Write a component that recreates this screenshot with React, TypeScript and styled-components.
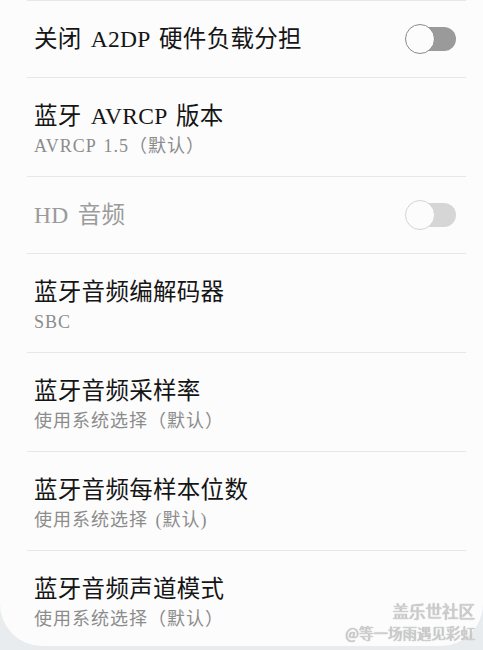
import React from "react"
import styled, { createGlobalStyle } from "styled-components"

const GlobalStyle = createGlobalStyle`
  html, body {
    margin: 0;
    padding: 0;
    background: #e9ecef;
  }
  body {
    font-family: "Liberation Serif", "Noto Sans CJK SC", serif;
  }
`

type TItem = {
  title: string
  summary?: string
  toggle?: boolean
  disabled?: boolean
}

const items: TItem[] = [
  { title: "关闭 A2DP 硬件负载分担", toggle: true },
  { title: "蓝牙 AVRCP 版本", summary: "AVRCP 1.5（默认）" },
  { title: "HD 音频", toggle: true, disabled: true },
  { title: "蓝牙音频编解码器", summary: "SBC" },
  { title: "蓝牙音频采样率", summary: "使用系统选择（默认）" },
  { title: "蓝牙音频每样本位数", summary: "使用系统选择 (默认)" },
  { title: "蓝牙音频声道模式", summary: "使用系统选择（默认）" },
]

const App: React.FC = () => {
  return (
    <Page>
      <GlobalStyle />
      <Card>
        {items.map((item) => (
          <React.Fragment key={item.title}>
            <Divider />
            <Row $tall={!!item.summary}>
              <Texts>
                <Title $disabled={item.disabled}>{item.title}</Title>
                {item.summary && <Summary>{item.summary}</Summary>}
              </Texts>
              {item.toggle && (
                <Switch $disabled={item.disabled}>
                  <span className="track" />
                  <span className="thumb" />
                </Switch>
              )}
            </Row>
          </React.Fragment>
        ))}
      </Card>
      <Watermark>
        <p className="brand">盖乐世社区</p>
        <p className="user">@等一场雨遇见彩虹</p>
      </Watermark>
    </Page>
  )
}

export default App

const Page = styled.div`
  position: relative;
  width: 483px;
  height: 650px;
  overflow: hidden;
  background: #e9ecef;
`

const Card = styled.div`
  display: flex;
  flex-direction: column;
  width: 483px;
  height: 646px;
  box-sizing: border-box;
  background: #fcfcfc;
  border-radius: 0 0 42px 42px;
  overflow: hidden;
`

const Divider = styled.div`
  height: 1px;
  margin: 0 17px 0 27px;
  background: #e7e7e7;
  flex-shrink: 0;
`

const Row = styled.div<{ $tall: boolean }>`
  display: flex;
  align-items: center;
  justify-content: space-between;
  height: ${({ $tall }) => ($tall ? "98px" : "76px")};
  padding: ${({ $tall }) => ($tall ? "5px 27px 0 34px" : "0 27px 0 34px")};
  box-sizing: border-box;
  flex-shrink: 0;
`

const Texts = styled.div`
  display: flex;
  flex-direction: column;
  gap: 1px;
`

const Title = styled.p<{ $disabled?: boolean }>`
  margin: 0;
  font-size: 23.5px;
  line-height: 32px;
  letter-spacing: 0.3px;
  word-spacing: 3px;
  color: ${({ $disabled }) => ($disabled ? "#9b9b9b" : "#151515")};
`

const Summary = styled.p`
  margin: 0;
  font-size: 18px;
  line-height: 26px;
  letter-spacing: 1px;
  word-spacing: 2px;
  color: #8c8c8c;
`

const Switch = styled.div<{ $disabled?: boolean }>`
  position: relative;
  width: 51px;
  height: 30px;
  flex-shrink: 0;
  > span.track {
    position: absolute;
    left: 4px;
    right: 0;
    top: 3px;
    height: 24px;
    border-radius: 12px;
    background: ${({ $disabled }) => ($disabled ? "#d6d6d6" : "#9a9a9a")};
  }
  > span.thumb {
    position: absolute;
    left: 0;
    top: 0;
    width: 30px;
    height: 30px;
    box-sizing: border-box;
    border-radius: 50%;
    background: #fcfcfc;
    border: 1.5px solid ${({ $disabled }) => ($disabled ? "#d4d4d4" : "#8a8a8a")};
  }
`

const Watermark = styled.div`
  position: absolute;
  right: 8px;
  bottom: 6px;
  display: flex;
  flex-direction: column;
  align-items: flex-end;
  font-family: "Noto Sans CJK SC", sans-serif;
  color: #cfcfcf;
  text-shadow: 0 0 1px #8f8f8f;
  > p {
    margin: 0;
  }
  > p.brand {
    font-size: 16.5px;
    line-height: 22px;
  }
  > p.user {
    font-size: 14.5px;
    line-height: 22px;
  }
`
